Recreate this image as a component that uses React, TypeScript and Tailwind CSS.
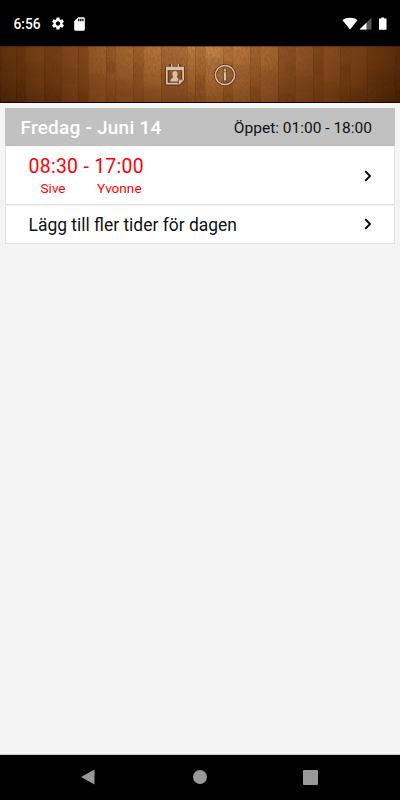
import { MdSdCard, MdSettings } from "react-icons/md";

const planks = [
  { x: 0, w: 16, shade: 0.04 },
  { x: 16, w: 9, shade: 0.24 },
  { x: 25, w: 19, shade: 0.06 },
  { x: 44, w: 17, shade: 0.26 },
  { x: 61, w: 17, shade: 0.14 },
  { x: 78, w: 10, shade: 0.24 },
  { x: 88, w: 18, shade: 0 },
  { x: 106, w: 9, shade: 0.12 },
  { x: 115, w: 18, shade: 0.05 },
  { x: 133, w: 10, shade: 0.2 },
  { x: 143, w: 18, shade: 0.04 },
  { x: 161, w: 26, shade: 0.22 },
  { x: 187, w: 8, shade: 0.1 },
  { x: 195, w: 10, shade: 0.2 },
  { x: 205, w: 18, shade: 0 },
  { x: 223, w: 9, shade: 0.12 },
  { x: 232, w: 18, shade: 0.04 },
  { x: 250, w: 10, shade: 0.2 },
  { x: 260, w: 18, shade: 0.06 },
  { x: 278, w: 17, shade: 0.28 },
  { x: 295, w: 18, shade: 0.14 },
  { x: 313, w: 10, shade: 0.26 },
  { x: 323, w: 17, shade: 0.06 },
  { x: 340, w: 10, shade: 0.16 },
  { x: 350, w: 17, shade: 0.08 },
  { x: 367, w: 28, shade: 0.2 },
  { x: 395, w: 5, shade: 0.3 },
];

const knots = [56, 111, 228, 290, 345];

function WoodTexture() {
  return (
    <svg className="absolute inset-0 h-full w-full" viewBox="0 0 400 57" preserveAspectRatio="none">
      <defs>
        <radialGradient id="glow" gradientUnits="userSpaceOnUse" cx="0" cy="0" r="1" gradientTransform="translate(200 -4) scale(240 115)">
          <stop offset="0" stopColor="#cd8c50" />
          <stop offset="0.25" stopColor="#b0703a" />
          <stop offset="0.5" stopColor="#8e5225" />
          <stop offset="0.75" stopColor="#6c3914" />
          <stop offset="1" stopColor="#401c07" />
        </radialGradient>
        <filter id="grain" x="0" y="0" width="100%" height="100%">
          <feTurbulence type="fractalNoise" baseFrequency="0.6 0.25" numOctaves="3" seed="7" />
          <feColorMatrix values="0 0 0 0 0.15  0 0 0 0 0.05  0 0 0 0 0  1.4 0 0 0 -0.5" />
        </filter>
      </defs>
      <rect width="400" height="57" fill="url(#glow)" />
      {planks.map((plank, index) => (
        <g key={plank.x}>
          <rect x={plank.x} width={plank.w} height="57" fill="#3c1200" opacity={plank.shade * 0.8} />
          <rect x={plank.x} width="0.6" height="57" fill="#2c0b00" opacity="0.2" />
          <rect x={plank.x} y={(index * 23) % 40 + 10} width={plank.w} height="16" fill="#2c0b00" opacity="0.05" />
        </g>
      ))}
      {knots.map((x) => (
        <g key={x} fill="none" stroke="#2c0b00" strokeWidth="0.6" opacity="0.2">
          <ellipse cx={x} cy="22" rx="2" ry="3" />
          <ellipse cx={x} cy="22" rx="4" ry="6" />
          <path d={`M${x - 4} 57 Q${x} 40 ${x + 4} 57 M${x - 4} 0 Q${x} 12 ${x + 4} 0`} />
        </g>
      ))}
      <rect width="400" height="57" filter="url(#grain)" opacity="0.45" />
      <rect width="400" height="1" fill="#2c0b00" opacity="0.4" />
      <rect y="56" width="400" height="1" fill="#120500" />
    </svg>
  );
}

function CalendarIcon() {
  return (
    <svg className="h-6 w-5" viewBox="0 0 20 24">
      <g fill="none" stroke="#351505" strokeWidth="3.2" opacity="0.65">
        <path d="M2 5H18V16.5L13.5 21H2Z M6 1V5 M14 1V5" />
      </g>
      <path fill="#d8bfb0" fillRule="evenodd" d="M1 3.7H6V1H7.2V3.7H12.8V1H14V3.7H19V17L14.5 21.5H1ZM2.7 7V19.8H13V16H17.2V7Z" />
      <path fill="#d8bfb0" d="M10 8C11.9 8 12.8 9.4 12.6 11.2C12.5 12.4 11.9 13.2 11.8 14C12 15.2 14 15.3 14.2 17V18.5H5.5V17.2C5.8 15.4 8 15.3 8.2 14C8 13.2 7.5 12.4 7.4 11.2C7.2 9.4 8.1 8 10 8Z" />
      <path d="M13.4 20.8V16.7H17.8" fill="none" stroke="#4c250f" strokeWidth="0.7" />
    </svg>
  );
}

function InfoIcon() {
  return (
    <svg className="h-6 w-6" viewBox="0 0 24 24" fill="none">
      <circle cx="12" cy="12" r="9.6" stroke="#351505" strokeWidth="3" opacity="0.6" />
      <circle cx="12" cy="12" r="9.6" stroke="#d8bfb0" strokeWidth="1.5" />
      <path d="M12 6V8.2M12 9.6V18" stroke="#351505" strokeWidth="4" opacity="0.5" />
      <path d="M12 6.2V8.2M12 9.2V17.6" stroke="#d8bfb0" strokeWidth="2.4" />
    </svg>
  );
}

function Chevron() {
  return (
    <svg className="h-3 w-2" viewBox="0 0 8 12" fill="none">
      <path d="M1.2 1.2L6 6L1.2 10.8" stroke="black" strokeWidth="1.9" />
    </svg>
  );
}

function StatusBar() {
  return (
    <div className="flex h-[46px] shrink-0 items-center bg-black pr-[13px] pl-[13.5px] pt-px text-white">
      <span className="w-[36.5px] text-[13.8px] font-medium leading-4">6:56</span>
      <MdSettings className="h-[15px] w-4" />
      <MdSdCard className="ml-[5px] h-4 w-[17px]" />
      <svg className="ml-auto h-[14px] w-[46px]" viewBox="0 0 46 14">
        <path d="M1.5 3.2C5.5 0 12.5 0 16.5 3.2L9 12.5Z" fill="white" />
        <path d="M30.5 0.8V12.5H18.5Z" fill="#555" />
        <path d="M25.5 5.7V12.5H18.5Z" fill="white" />
        <path d="M40.2 0.5H43.2V1.5H45.5V12.7H38V1.5H40.2Z" fill="white" />
      </svg>
    </div>
  );
}

function Toolbar() {
  return (
    <header className="relative h-[57px] shrink-0 overflow-hidden bg-[#5c2e10]">
      <WoodTexture />
      <div className="relative flex items-center gap-[28px] pt-[17px] pl-[165px]">
        <CalendarIcon />
        <InfoIcon />
      </div>
    </header>
  );
}

function Schedule() {
  return (
    <main className="grow border-b border-[#d0d0d0] bg-[#f4f4f4] px-[5px] pt-[5px]">
      <div className="flex h-[38px] items-center justify-between bg-[#c1c1c1] pr-[23px] pl-[15.5px] pt-[3px]">
        <h1 className="text-[19px] font-medium tracking-[0.22px] text-white">Fredag - Juni 14</h1>
        <span className="text-[15.5px] text-[#111]">Öppet: 01:00 - 18:00</span>
      </div>
      <div className="mt-px flex h-[58px] items-center justify-between border-x border-b border-[#e2e2e2] bg-white pr-[22px] pl-[22.5px] text-[#f00]">
        <div className="pt-[3px]">
          <p className="text-[19.4px] leading-[22px] tracking-[0.3px]">08:30 - 17:00</p>
          <div className="flex gap-[31.5px] pl-3 text-[13.6px] leading-5">
            <span>Sive</span>
            <span>Yvonne</span>
          </div>
        </div>
        <Chevron />
      </div>
      <div className="mt-px flex h-[38px] items-center justify-between border-x border-b border-[#e2e2e2] bg-white pr-[22px] pb-px pl-[22.5px]">
        <span className="pt-0.5 text-[17.45px] text-[#111]">Lägg till fler tider för dagen</span>
        <Chevron />
      </div>
    </main>
  );
}

function NavigationBar() {
  return (
    <nav className="flex h-[45px] shrink-0 items-center justify-between bg-black pr-[82px] pb-px pl-[80px]">
      <svg className="h-4 w-4" viewBox="0 0 16 16">
        <path d="M1 8L14.5 0.5V15.5Z" fill="#999" />
      </svg>
      <div className="h-[14px] w-[14px] rounded-full bg-[#999]"></div>
      <div className="h-[15px] w-[15px] rounded-[1px] bg-[#999]"></div>
    </nav>
  );
}

export default function App() {
  return (
    <div className="flex h-[800px] w-[400px] flex-col overflow-hidden font-[Roboto,sans-serif]">
      <StatusBar />
      <Toolbar />
      <Schedule />
      <NavigationBar />
    </div>
  );
}
